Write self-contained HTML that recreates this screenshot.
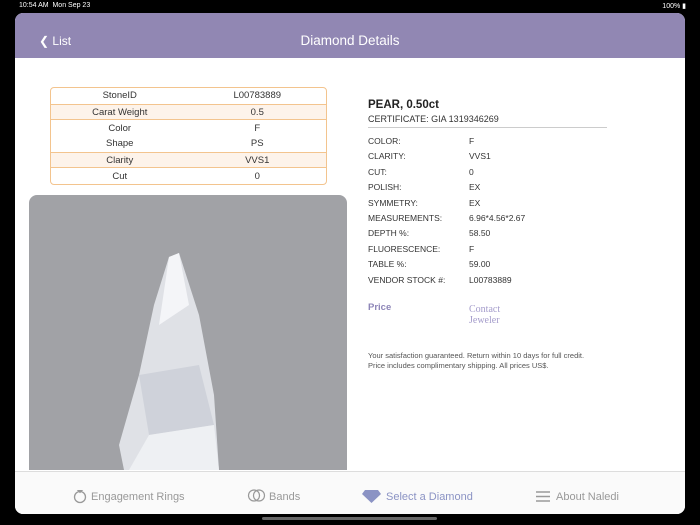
<!DOCTYPE html>
<html><head><style>
body{margin:0;width:700px;height:525px;background:#000;position:relative;overflow:hidden;font-family:"Liberation Sans",sans-serif;}
.st{position:absolute;top:2px;left:19px;color:#fff;font-size:7px;}
.st2{position:absolute;top:2px;right:14px;color:#fff;font-size:7px;}
.app{position:absolute;left:15px;top:13px;width:670px;height:501px;background:#fff;border-radius:8px;overflow:hidden;}
.hdr{position:absolute;left:0;top:0;width:670px;height:45px;background:#9187b3;color:#fff;}
.hdr .t{position:absolute;left:0;right:0;top:20px;text-align:center;font-size:13.5px;}
.hdr .b{position:absolute;left:24px;top:21px;font-size:12px;}
table{position:absolute;left:35px;top:74px;width:277px;border-collapse:separate;border-spacing:0;border:1px solid #f3c48e;border-radius:4px;font-size:9.5px;color:#333;}
td{height:15.7px;padding:0;text-align:center;width:50%;}
tr.s td{background:#fdf3ea;border-top:1px solid #f3c48e;border-bottom:1px solid #f3c48e;height:14.7px;}
.img{position:absolute;left:14px;top:182px;width:318px;height:275px;background:#a1a2a6;border-radius:8px 8px 0 0;overflow:hidden;}
.r{position:absolute;left:353px;color:#333;font-size:8.5px;}
.tab{position:absolute;left:0;top:458px;width:670px;height:43px;background:#fafafa;border-top:1px solid #ddd;font-size:11px;color:#999;}
.tab span{position:absolute;top:19px;}
</style></head><body>
<div class="st">10:54 AM&nbsp;&nbsp;Mon Sep 23</div>
<div class="st2">100% ▮</div>
<div class="app">
<div class="hdr"><div class="b">&#10094; List</div><div class="t">Diamond Details</div></div>
<table>
<tr><td>StoneID</td><td>L00783889</td></tr>
<tr class="s"><td>Carat Weight</td><td>0.5</td></tr>
<tr><td>Color</td><td>F</td></tr>
<tr><td>Shape</td><td>PS</td></tr>
<tr class="s"><td>Clarity</td><td>VVS1</td></tr>
<tr><td>Cut</td><td>0</td></tr>
</table>
<div class="img"><svg width="318" height="275"><polygon points="140,62 150,58 170,120 185,200 190,275 95,275 90,250 110,180 125,110" fill="#dfe1e6"/><polygon points="140,62 150,58 160,110 130,130" fill="#f4f5f8"/><polygon points="110,180 170,170 185,230 120,240" fill="#cfd2da"/><polygon points="120,240 185,230 190,275 100,275" fill="#eef0f3"/></svg></div>
<div class="r" style="top:86px;font-size:11.5px;font-weight:bold;color:#222">PEAR, 0.50ct</div>
<div class="r" style="top:101px;font-size:9px">CERTIFICATE: GIA 1319346269</div>
<div style="position:absolute;left:353px;top:114px;width:239px;border-top:1px solid #ccc"></div>
<div class="r" style="top:121px;line-height:15.4px">COLOR:<br>CLARITY:<br>CUT:<br>POLISH:<br>SYMMETRY:<br>MEASUREMENTS:<br>DEPTH %:<br>FLUORESCENCE:<br>TABLE %:<br>VENDOR STOCK #:</div>
<div class="r" style="top:121px;left:454px;line-height:15.4px">F<br>VVS1<br>0<br>EX<br>EX<br>6.96*4.56*2.67<br>58.50<br>F<br>59.00<br>L00783889</div>
<div class="r" style="top:289px;font-size:9.5px;font-weight:bold;color:#8e86b8">Price</div>
<div class="r" style="top:291px;left:454px;font-family:'Liberation Serif',serif;font-size:10px;color:#a49ccb;line-height:11px">Contact<br>Jeweler</div>
<div class="r" style="top:338px;font-size:7.5px;line-height:10px;color:#555">Your satisfaction guaranteed. Return within 10 days for full credit.<br>Price includes complimentary shipping. All prices US$.</div>
<div class="tab">
<svg style="position:absolute;left:58px;top:15px" width="14" height="17"><circle cx="7" cy="10" r="5.5" fill="none" stroke="#999" stroke-width="1.3"/><path d="M5 3.5h4l-2 2z" fill="none" stroke="#999"/></svg>
<span style="left:76px">Engagement Rings</span>
<svg style="position:absolute;left:232px;top:16px" width="20" height="15"><circle cx="7" cy="7.5" r="5.5" fill="none" stroke="#999" stroke-width="1.2"/><circle cx="12" cy="7.5" r="5.5" fill="none" stroke="#999" stroke-width="1.2"/></svg>
<span style="left:254px">Bands</span>
<svg style="position:absolute;left:347px;top:18px" width="20" height="13"><path d="M3 0h13l3 4-9.5 9L0 4z" fill="#8b93c4"/></svg>
<span style="left:371px;color:#8b93c4">Select a Diamond</span>
<svg style="position:absolute;left:521px;top:19px" width="15" height="11"><path d="M0 1h14M0 5.5h14M0 10h14" stroke="#999" stroke-width="1.4"/></svg>
<span style="left:541px">About Naledi</span>
</div>
</div>
<div style="position:absolute;left:262px;top:517px;width:175px;height:3px;border-radius:2px;background:#666"></div>
</body></html>
